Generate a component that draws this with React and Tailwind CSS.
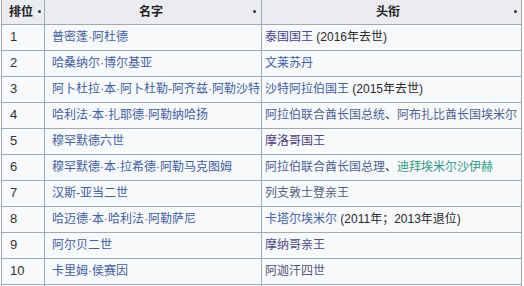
import React from "react";

const rows = [
  { n: "1", name: "普密蓬·阿杜德", title: [["泰国国王", "#4a3f8f"], [" (2016年去世)", "#2a2a2a"]] },
  { n: "2", name: "哈桑纳尔·博尔基亚", title: [["文莱苏丹", "#3a5ea8"]] },
  { n: "3", name: "阿卜杜拉·本·阿卜杜勒-阿齐兹·阿勒沙特", title: [["沙特阿拉伯国王", "#3f5fa3"], [" (2015年去世)", "#2a2a2a"]] },
  { n: "4", name: "哈利法·本·扎耶德·阿勒纳哈扬", title: [["阿拉伯联合酋长国总统", "#4d6294"], ["、", "#333"], ["阿布扎比酋长国埃米尔", "#4d6294"]] },
  { n: "5", name: "穆罕默德六世", title: [["摩洛哥国王", "#4f3f86"]] },
  { n: "6", name: "穆罕默德·本·拉希德·阿勒马克图姆", title: [["阿拉伯联合酋长国总理", "#4d6294"], ["、", "#333"], ["迪拜埃米尔沙伊赫", "#2f9a86"]] },
  { n: "7", name: "汉斯-亚当二世", title: [["列支敦士登亲王", "#55607e"]] },
  { n: "8", name: "哈迈德·本·哈利法·阿勒萨尼", title: [["卡塔尔埃米尔", "#3f5fa3"], [" (2011年；2013年退位)", "#2a2a2a"]] },
  { n: "9", name: "阿尔贝二世", title: [["摩纳哥亲王", "#4f4a88"]] },
  { n: "10", name: "卡里姆·侯赛因", title: [["阿迦汗四世", "#56557e"]] },
];

function SortDot() {
  return <span className="inline-block w-[3px] h-[3px] rounded-full bg-[#333]" />;
}

export default function App() {
  return (
    <div className="w-[524px] h-[286px] overflow-hidden bg-white pl-[1px] text-[12px] text-[#222]" style={{ fontFamily: '"Liberation Sans", "Noto Sans CJK SC", sans-serif' }}>
      <table className="w-[520px] table-fixed border-collapse bg-[#f8f9fa]">
        <colgroup>
          <col className="w-[43px]" />
          <col className="w-[217px]" />
          <col className="w-[260px]" />
        </colgroup>
        <thead>
          <tr className="h-[24px] bg-[#eaecf0]">
            <th className="border-x border-b border-[#a2a9b1] pl-[7px] pr-[2px] text-left font-bold">
              <div className="flex items-center gap-[5px]">
                <span>排位</span>
                <SortDot />
              </div>
            </th>
            <th className="border-x border-b border-[#a2a9b1] pr-[5px] font-bold">
              <div className="flex items-center">
                <span className="flex-1 text-center pl-[4px]">名字</span>
                <SortDot />
              </div>
            </th>
            <th className="border-x border-b border-[#a2a9b1] pr-[4px] font-bold">
              <div className="flex items-center">
                <span className="flex-1 text-center">头衔</span>
                <SortDot />
              </div>
            </th>
          </tr>
        </thead>
        <tbody>
          {rows.map((r) => (
            <tr key={r.n} className="h-[26px]">
              <td className="border border-[#a2a9b1] pl-[8px] text-[#333] text-[13px]">{r.n}</td>
              <td className="border border-[#a2a9b1] pl-[7px] text-[#3f5fa3] whitespace-nowrap">{r.name}</td>
              <td className="border border-[#a2a9b1] pl-[3px] whitespace-nowrap">
                {r.title.map(([t, c], i) => (
                  <span key={i} style={{ color: c }}>{t}</span>
                ))}
              </td>
            </tr>
          ))}
          <tr className="h-[26px]">
            <td className="border border-[#a2a9b1]" />
            <td className="border border-[#a2a9b1]" />
            <td className="border border-[#a2a9b1]" />
          </tr>
        </tbody>
      </table>
    </div>
  );
}
